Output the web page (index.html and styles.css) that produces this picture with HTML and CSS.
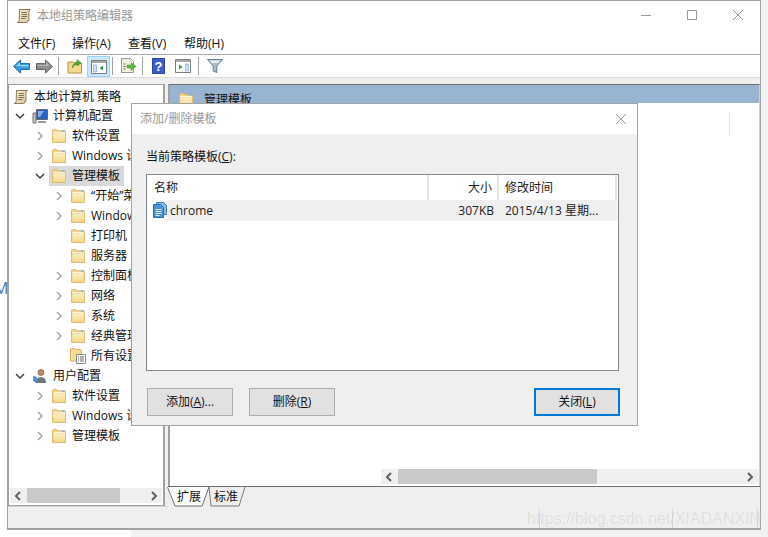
FILE: index.html
```html
<!DOCTYPE html>
<html lang="zh-CN">
<head>
<meta charset="utf-8">
<title>本地组策略编辑器</title>
<link rel="stylesheet" href="styles.css">
</head>
<body>
<svg class="defs" width="0" height="0" aria-hidden="true">
  <defs>
    <linearGradient id="fold" x1="0" y1="0" x2="0" y2="1">
      <stop offset="0" stop-color="#fdeec4"/>
      <stop offset="1" stop-color="#f6d88c"/>
    </linearGradient>
    <linearGradient id="parch" x1="0" y1="0" x2="1" y2="1">
      <stop offset="0" stop-color="#f7eed6"/>
      <stop offset="1" stop-color="#d9c79c"/>
    </linearGradient>
    <symbol id="folder" viewBox="0 0 16 16">
      <path d="M1.500 14.500V2.600q0-1 1-1h3.400l1.200 1.200h6.400q1 0 1 1v10.700z" fill="#f3d38a" stroke="#dcbb6d"/>
      <path d="M2.500 5.400h11.600v8.600H2.500z" fill="url(#fold)"/>
      <path d="M2.200 4.600h11.900" stroke="#fff8e0" fill="none"/>
      <path d="M11 2.200h2.600v1.600H11z" fill="#7fb8e4"/>
    </symbol>
    <symbol id="scroll" viewBox="0 0 16 16">
      <path d="M3.500 1.500h11l-1.600 1.600v9.400H11.800q-.2 2-1.600 2H1.200q1.800-.6 2-2.200z" fill="url(#parch)" stroke="#8c7d58"/>
      <path d="M5.500 4.500h5.500M5.500 6.500h5.500M5.500 8.500h5.500M5 10.500h4.500" stroke="#7f7152" fill="none"/>
    </symbol>
    <symbol id="chev-r" viewBox="0 0 10 10">
      <path d="M3 1l4 4-4 4" fill="none" stroke="#a6a6a6" stroke-width="1.500"/>
    </symbol>
    <symbol id="chev-d" viewBox="0 0 10 10">
      <path d="M1 3l4 4 4-4" fill="none" stroke="#404040" stroke-width="1.500"/>
    </symbol>
  </defs>
</svg>

<div class="white-left"><span class="stray">M</span></div>
<div class="white-bottom"></div>

<div class="window">
  <header class="titlebar">
    <svg class="title-icon"><use href="#scroll"/></svg>
    <span class="title-text">本地组策略编辑器</span>
    <div class="controls">
      <svg class="ctl" viewBox="0 0 10 10"><path d="M0 5.500h10" stroke="#999" fill="none"/></svg>
      <svg class="ctl" viewBox="0 0 10 10"><path d="M.5.500h9v9h-9z" stroke="#999" fill="none"/></svg>
      <svg class="ctl" viewBox="0 0 10 10"><path d="M0 0l10 10M10 0L0 10" stroke="#999" fill="none"/></svg>
    </div>
  </header>
  <nav class="menubar">
    <span class="menu">文件(F)</span>
    <span class="menu">操作(A)</span>
    <span class="menu">查看(V)</span>
    <span class="menu">帮助(H)</span>
  </nav>
  <div class="toolbar">
    <span class="tool">
      <svg viewBox="0 0 17 15" width="17" height="15"><path d="M.5 7.500L7.500 1v3.500h9v6h-9V14z" fill="#3b9ae0" stroke="#1f6fb5"/><path d="M3 7l4-3.500V6h8.500v1.500z" fill="#9fd6f7"/></svg>
    </span>
    <span class="tool">
      <svg viewBox="0 0 17 15" width="17" height="15"><path d="M16.500 7.500L9.500 1v3.500h-9v6h9V14z" fill="#8c8c8c" stroke="#666"/><path d="M2 6h8V3.500L14 7H2z" fill="#b5b5b5"/></svg>
    </span>
    <i class="sep"></i>
    <span class="tool">
      <svg viewBox="0 0 16 16" width="16" height="16"><path d="M1 15V4h5l1 1h7.500v10z" fill="#f5d98c" stroke="#b8923f"/><path d="M5 10q1-5 5-6V1.500L14 5l-4 3V6q-3 .5-5 4z" fill="#4ea63a" stroke="#2d7a22" stroke-width=".5"/></svg>
    </span>
    <span class="tool tool-on">
      <svg viewBox="0 0 16 15" width="16" height="15"><path d="M.5 1.500h15v13H.500z" fill="#fff" stroke="#7d7d7d"/><path d="M1 2h14v2H1z" fill="#a8a8a8"/><path d="M2.500 6h3v7h-3z" fill="#cfe3f3" stroke="#5a8fbd" stroke-width=".5"/><path d="M12 6.500v5l-3.500-2.500z" fill="#2f9e44"/></svg>
    </span>
    <i class="sep"></i>
    <span class="tool">
      <svg viewBox="0 0 17 16" width="17" height="16"><path d="M1.500.500h9l3 3v11h-12z" fill="#f6f1dc" stroke="#9a9a9a"/><path d="M3.500 6h2M3.500 8.500h2M3.500 11h2" stroke="#555" fill="none"/><path d="M7 7h4V4.500l5 4-5 4V10H7z" fill="#5dbb46" stroke="#3a8f2a" stroke-width=".5"/></svg>
    </span>
    <i class="sep"></i>
    <span class="tool">
      <svg viewBox="0 0 13 16" width="13" height="16"><path d="M0 0h13v16H0z" fill="#2b44a8"/><path d="M1 1h11v14H1z" fill="#3d5cc4"/><text x="6.500" y="13" class="help-q">?</text></svg>
    </span>
    <span class="tool tool-view">
      <svg viewBox="0 0 16 14" width="16" height="14"><path d="M.5 .500h15v13H.500z" fill="#fff" stroke="#7d7d7d"/><path d="M1 1h14v2H1z" fill="#a8a8a8"/><path d="M10.500 5h3v7h-3z" fill="#cfe3f3" stroke="#5a8fbd" stroke-width=".5"/><path d="M4 5.500v5l3.500-2.500z" fill="#2f9e44"/></svg>
    </span>
    <i class="sep"></i>
    <span class="tool">
      <svg viewBox="0 0 16 16" width="16" height="16"><path d="M.5 1.500h15L9.800 8v6.500l-3.600-1.500V8z" fill="#a9bdca" stroke="#66808f"/><path d="M2.500 2.500h11L11 5H5z" fill="#e4edf2"/></svg>
    </span>
  </div>
  <div class="band"></div>

  <main class="panes">
    <section class="tree-pane">
      <div class="tree">
        <div class="row lv0"><svg class="ico"><use href="#scroll"/></svg><span>本地计算机 策略</span></div>
        <div class="row lv1">
          <svg class="chev"><use href="#chev-d"/></svg>
          <svg class="ico" viewBox="0 0 16 16"><path d="M4.500 1.500h11v10h-11z" fill="#2a5fc4" stroke="#666"/><path d="M6 3h6l-4 6H6z" fill="#7fb0ee"/><path d="M1 5h3v10H1z" fill="#c7c7c7" stroke="#6f6f6f"/><path d="M6 13h8v2H6z" fill="#9a9a9a"/></svg>
          <span>计算机配置</span>
        </div>
        <div class="row lv2"><svg class="chev"><use href="#chev-r"/></svg><svg class="ico"><use href="#folder"/></svg><span>软件设置</span></div>
        <div class="row lv2"><svg class="chev"><use href="#chev-r"/></svg><svg class="ico"><use href="#folder"/></svg><span>Windows 设置</span></div>
        <div class="row lv2"><svg class="chev"><use href="#chev-d"/></svg><span class="picked"><svg class="ico"><use href="#folder"/></svg><span>管理模板</span></span></div>
        <div class="row lv3"><svg class="chev"><use href="#chev-r"/></svg><svg class="ico"><use href="#folder"/></svg><span>“开始”菜单和任务栏</span></div>
        <div class="row lv3"><svg class="chev"><use href="#chev-r"/></svg><svg class="ico"><use href="#folder"/></svg><span>Windows 组件</span></div>
        <div class="row lv3"><span class="chev"></span><svg class="ico"><use href="#folder"/></svg><span>打印机</span></div>
        <div class="row lv3"><span class="chev"></span><svg class="ico"><use href="#folder"/></svg><span>服务器</span></div>
        <div class="row lv3"><svg class="chev"><use href="#chev-r"/></svg><svg class="ico"><use href="#folder"/></svg><span>控制面板</span></div>
        <div class="row lv3"><svg class="chev"><use href="#chev-r"/></svg><svg class="ico"><use href="#folder"/></svg><span>网络</span></div>
        <div class="row lv3"><svg class="chev"><use href="#chev-r"/></svg><svg class="ico"><use href="#folder"/></svg><span>系统</span></div>
        <div class="row lv3"><svg class="chev"><use href="#chev-r"/></svg><svg class="ico"><use href="#folder"/></svg><span>经典管理模板</span></div>
        <div class="row lv3"><span class="chev"></span>
          <svg class="ico" viewBox="0 0 16 16"><path d="M.5 13V1.600q0-1 1-1h3l1 1h5q1 0 1 1V13z" fill="#f7dc95" stroke="#d9b45f"/><path d="M6.500 6.500h9v9h-9z" fill="#fff" stroke="#8a8a8a"/><path d="M8 9h1M10 9h4M8 11h1M10 11h4M8 13h1M10 13h4" stroke="#666" fill="none"/></svg>
          <span>所有设置</span>
        </div>
        <div class="row lv1">
          <svg class="chev"><use href="#chev-d"/></svg>
          <svg class="ico" viewBox="0 0 16 16"><circle cx="9" cy="4.500" r="3" fill="#b98a63" stroke="#6e5238" stroke-width=".6"/><path d="M4 15q0-6 5-6t5 6z" fill="#6c7480"/><path d="M1.500 8l3 1.500v5l-3-1.500z" fill="#4a93d6" stroke="#2a6aa8" stroke-width=".5"/></svg>
          <span>用户配置</span>
        </div>
        <div class="row lv2"><svg class="chev"><use href="#chev-r"/></svg><svg class="ico"><use href="#folder"/></svg><span>软件设置</span></div>
        <div class="row lv2"><svg class="chev"><use href="#chev-r"/></svg><svg class="ico"><use href="#folder"/></svg><span>Windows 设置</span></div>
        <div class="row lv2"><svg class="chev"><use href="#chev-r"/></svg><svg class="ico"><use href="#folder"/></svg><span>管理模板</span></div>
      </div>
      <div class="hscroll hscroll-left">
        <svg class="arrow" viewBox="0 0 10 10"><path d="M7 1L3 5l4 4" fill="none" stroke="#606060" stroke-width="2"/></svg>
        <div class="track"><div class="thumb thumb-left"></div></div>
        <svg class="arrow" viewBox="0 0 10 10"><path d="M3 1l4 4-4 4" fill="none" stroke="#606060" stroke-width="2"/></svg>
      </div>
    </section>

    <section class="detail-pane">
      <div class="detail-frame">
        <div class="detail-head"><svg class="ico"><use href="#folder"/></svg><span>管理模板</span></div>
        <div class="detail-body"><i class="col-rule"></i></div>
        <div class="hscroll hscroll-right">
          <svg class="arrow" viewBox="0 0 10 10"><path d="M7 1L3 5l4 4" fill="none" stroke="#606060" stroke-width="2"/></svg>
          <div class="track"><div class="thumb thumb-right"></div></div>
          <svg class="arrow" viewBox="0 0 10 10"><path d="M3 1l4 4-4 4" fill="none" stroke="#606060" stroke-width="2"/></svg>
        </div>
      </div>
      <div class="tabs">
        <svg class="tab-art" viewBox="0 0 80 21" width="80" height="21">
          <path d="M42 0L44 19H72L78 0" fill="none" stroke="#7a7a7a"/>
          <path d="M.5 0L8 19H35L42 0" fill="#fff" stroke="#6e6e6e"/>
        </svg>
        <span class="tab tab-on">扩展</span>
        <span class="tab">标准</span>
      </div>
    </section>
  </main>
  <footer class="statusbar"></footer>
</div>

<div class="dialog">
  <header class="dlg-title">
    <span>添加/删除模板</span>
    <svg class="dlg-close" viewBox="0 0 10 10"><path d="M0 0l10 10M10 0L0 10" stroke="#999" fill="none"/></svg>
  </header>
  <div class="dlg-body">
    <label class="dlg-label">当前策略模板(<u>C</u>):</label>
    <div class="listbox">
      <div class="list-head">
        <span class="c-name">名称</span>
        <span class="c-size">大小</span>
        <span class="c-time">修改时间</span>
      </div>
      <div class="list-row">
        <svg class="file-ico" viewBox="0 0 14 16"><path d="M3.500.500h7l3 3v9h-10z" fill="#8fb9de" stroke="#3f7fb5"/><path d="M.5 2.500h7l3 3v10H.500z" fill="#4b93d1" stroke="#2f6fa8"/><path d="M2.500 7.500h6M2.500 9.500h6M2.500 11.500h6M2.500 13.500h4" stroke="#d8ecfb" fill="none"/></svg>
        <span class="r-name">chrome</span>
        <span class="c-size">307KB</span>
        <span class="c-time">2015/4/13 星期...</span>
      </div>
    </div>
    <div class="dlg-actions">
      <div class="btn-group">
        <button class="btn">添加(<u>A</u>)...</button>
        <button class="btn">删除(<u>R</u>)</button>
      </div>
      <button class="btn btn-default">关闭(<u>L</u>)</button>
    </div>
  </div>
</div>

<div class="watermark">https://blog.csdn.net/XIADANXIN<i class="wm-rule wm-a"></i><i class="wm-rule wm-b"></i><i class="wm-rule wm-c"></i></div>
</body>
</html>
```
FILE: styles.css
```css
* { box-sizing: border-box; }
html, body { margin: 0; padding: 0; height: 100%; }
body {
  position: relative;
  width: 768px;
  height: 537px;
  overflow: hidden;
  background: #f1f1f1;
  font: 12px/20px "Open Sans", "Noto Sans CJK SC", sans-serif;
  color: #1a1a1a;
}
.defs { position: absolute; }

.white-left { position: absolute; left: 0; top: 0; width: 7px; height: 537px; background: #fff; overflow: hidden; }
.stray { position: absolute; left: -6px; top: 278px; color: #4a78a8; font-size: 16px; }
.white-bottom { position: absolute; left: 0; top: 530px; width: 131px; height: 7px; background: #fff; }

.window {
  position: absolute;
  left: 7px;
  top: 0;
  width: 754px;
  height: 530px;
  display: flex;
  flex-direction: column;
  background: #fff;
  border: 1px solid #a3a3a3;
  border-bottom-width: 2px;
}

.titlebar { height: 29px; display: flex; align-items: center; padding-left: 8px; color: #999; flex: none; }
.title-icon { width: 16px; height: 16px; margin-right: 5px; }
.title-text { flex: 1; }
.controls { display: flex; gap: 36px; padding-right: 17px; margin-bottom: 1px; }
.ctl { width: 10px; height: 10px; }

.menubar { height: 25px; display: flex; padding: 4px 0 0 10px; align-items: center; border-bottom: 1px solid #ababab; flex: none; gap: 16px; }
.menu { width: 40px; white-space: nowrap; color: #111; }
.menu:first-child { width: 38px; }

.toolbar { height: 23px; display: flex; align-items: center; padding-left: 2px; border-bottom: 1px solid #dcdcdc; flex: none; }
.tool { width: 23px; height: 21px; display: flex; align-items: center; justify-content: center; }
.tool-on { background: #cce8ff; border: 1px solid #99d1ff; margin-left: 1px; }
.tool-view { margin-right: 2px; margin-left: 1px; }
.sep { width: 1px; height: 18px; background: #a0a0a0; margin: 0 4px 0 2px; }
.help-q { font: bold 13px "Liberation Sans", sans-serif; fill: #fff; text-anchor: middle; }

.band { height: 6px; background: #efefef; flex: none; }

.panes { flex: 1; min-height: 0; display: flex; background: #efefef; }

.tree-pane { width: 157px; flex: none; display: flex; flex-direction: column; background: #fff; border: 2px solid #a0a0a0; border-top: 1px solid #a0a0a0; border-left-width: 1px; height: 423px; }
.tree { flex: 1; min-height: 0; overflow: hidden; padding-top: 1px; }
.row { height: 20px; display: flex; align-items: center; white-space: nowrap; color: #111; }
.ico { width: 16px; height: 16px; flex: none; }
.chev { width: 10px; height: 10px; flex: none; }
.lv0 { padding: 2px 0 0 4px; }
.lv0 .ico { margin-right: 5px; }
.lv1 { padding-left: 6px; }
.lv1 .chev { margin-right: 7px; }
.lv1 .ico { margin-right: 5px; }
.lv2 { padding-left: 26px; }
.lv2 .chev { margin-right: 6px; }
.lv2 .ico { margin-right: 5px; }
.lv3 { padding-left: 45px; }
.lv3 .chev { margin-right: 6px; }
.lv3 .ico { margin-right: 5px; }
.picked { display: flex; align-items: center; background: #d9d9d9; height: 20px; margin-left: -2px; padding-left: 2px; width: 75px; flex: none; }

.hscroll { height: 15px; display: flex; align-items: center; background: #efefef; flex: none; }
.hscroll-left { margin: 0 1px 2px; }
.arrow { width: 10px; height: 10px; flex: none; margin: 0 3px; }
.track { flex: 1; height: 15px; }
.thumb { height: 15px; background: #c9c9c9; }
.thumb-left { width: 93px; margin-left: 1px; }
.thumb-right { width: 199px; }

.detail-pane { flex: 1; min-width: 0; display: flex; flex-direction: column; margin-left: 3px; }
.detail-frame { height: 402px; display: flex; flex-direction: column; background: #fff; border: 0 solid #9f9f9f; border-top: 1px solid #6e6e6e; border-left-width: 2px; border-right: 1px solid #d0d0d0; flex: none; }
.detail-head { height: 18px; background: #99b4d1; display: flex; align-items: flex-start; padding: 5px 0 0 8px; color: #111; flex: none; }
.detail-head .ico { margin: 2px 10px 0 0; }
.detail-body { flex: 1; position: relative; }
.col-rule { position: absolute; right: 29px; top: 9px; width: 1px; height: 24px; background: #e3e3e3; }
.hscroll-right { margin: 0 0 2px 211px; }
.hscroll-right .arrow:first-child { margin: 0 4px 0 3px; }
.hscroll-right .arrow:last-child { margin: 0 4px; }

.tabs { height: 21px; position: relative; display: flex; padding-left: 2px; border-top: 1px solid #6e6e6e; background: #efefef; flex: none; }
.tab-art { position: absolute; left: -1px; top: 0; }
.tab { position: relative; width: 36px; text-align: center; line-height: 20px; color: #111; }
.tab-on { width: 38px; }

.statusbar { flex: none; height: 22px; background: #efefef; border-top: 1px solid #d4d4d4; }

.dialog {
  position: absolute;
  left: 131px;
  top: 103px;
  width: 507px;
  height: 323px;
  display: flex;
  flex-direction: column;
  background: #efefef;
  border: 1px solid #a3a3a3;
}
.dlg-title { height: 30px; background: #fff; display: flex; align-items: center; justify-content: space-between; padding: 0 11px 0 8px; color: #999; flex: none; }
.dlg-close { width: 10px; height: 10px; }
.dlg-body { flex: 1; display: flex; flex-direction: column; padding: 13px 17px 9px 14px; min-height: 0; }
.dlg-label { display: block; height: 20px; line-height: 20px; margin-bottom: 7px; color: #111; }
.listbox { height: 197px; width: 473px; background: #fff; border: 1px solid #828790; flex: none; }
.list-head { height: 25px; display: flex; align-items: center; color: #222; }
.list-head span { height: 25px; line-height: 26px; }
.c-name { width: 282px; padding-left: 7px; border-right: 2px solid #e5e5e5; }
.c-size { width: 70px; text-align: right; padding-right: 5px; }
.list-head .c-size { border-right: 2px solid #e5e5e5; }
.c-time { padding-left: 6px; white-space: nowrap; }
.list-head .c-time { width: 118px; border-right: 2px solid #e5e5e5; }
.list-row { height: 21px; display: flex; align-items: center; position: relative; padding-left: 21px; color: #222; }
.list-row::before { content: ""; position: absolute; left: 21px; top: 0; bottom: 0; width: 449px; background: #efefef; }
.file-ico { position: absolute; left: 6px; top: 2px; width: 14px; height: 16px; }
.list-row span { position: relative; }
.r-name { width: 261px; padding-left: 2px; }
.dlg-actions { display: flex; justify-content: space-between; margin-top: 17px; }
.btn-group { display: flex; gap: 16px; margin-left: 1px; }
.btn { width: 86px; height: 28px; padding: 0; background: #e1e1e1; border: 1px solid #adadad; font: inherit; color: #111; }
.btn-default { border: 2px solid #0078d7; }

.watermark {
  position: absolute;
  left: 527px;
  top: 508px;
  width: 234px;
  height: 22px;
  white-space: nowrap;
  font: 16px/22px "Liberation Sans", sans-serif;
  color: #dedede;
  text-shadow: 0 0 1px #fff;
  overflow: hidden;
}
.wm-rule { position: absolute; top: 1px; width: 1px; height: 19px; background: #d4d4d4; }
.wm-a { left: 12px; }
.wm-b { left: 145px; }
.wm-c { left: 230px; }
```
